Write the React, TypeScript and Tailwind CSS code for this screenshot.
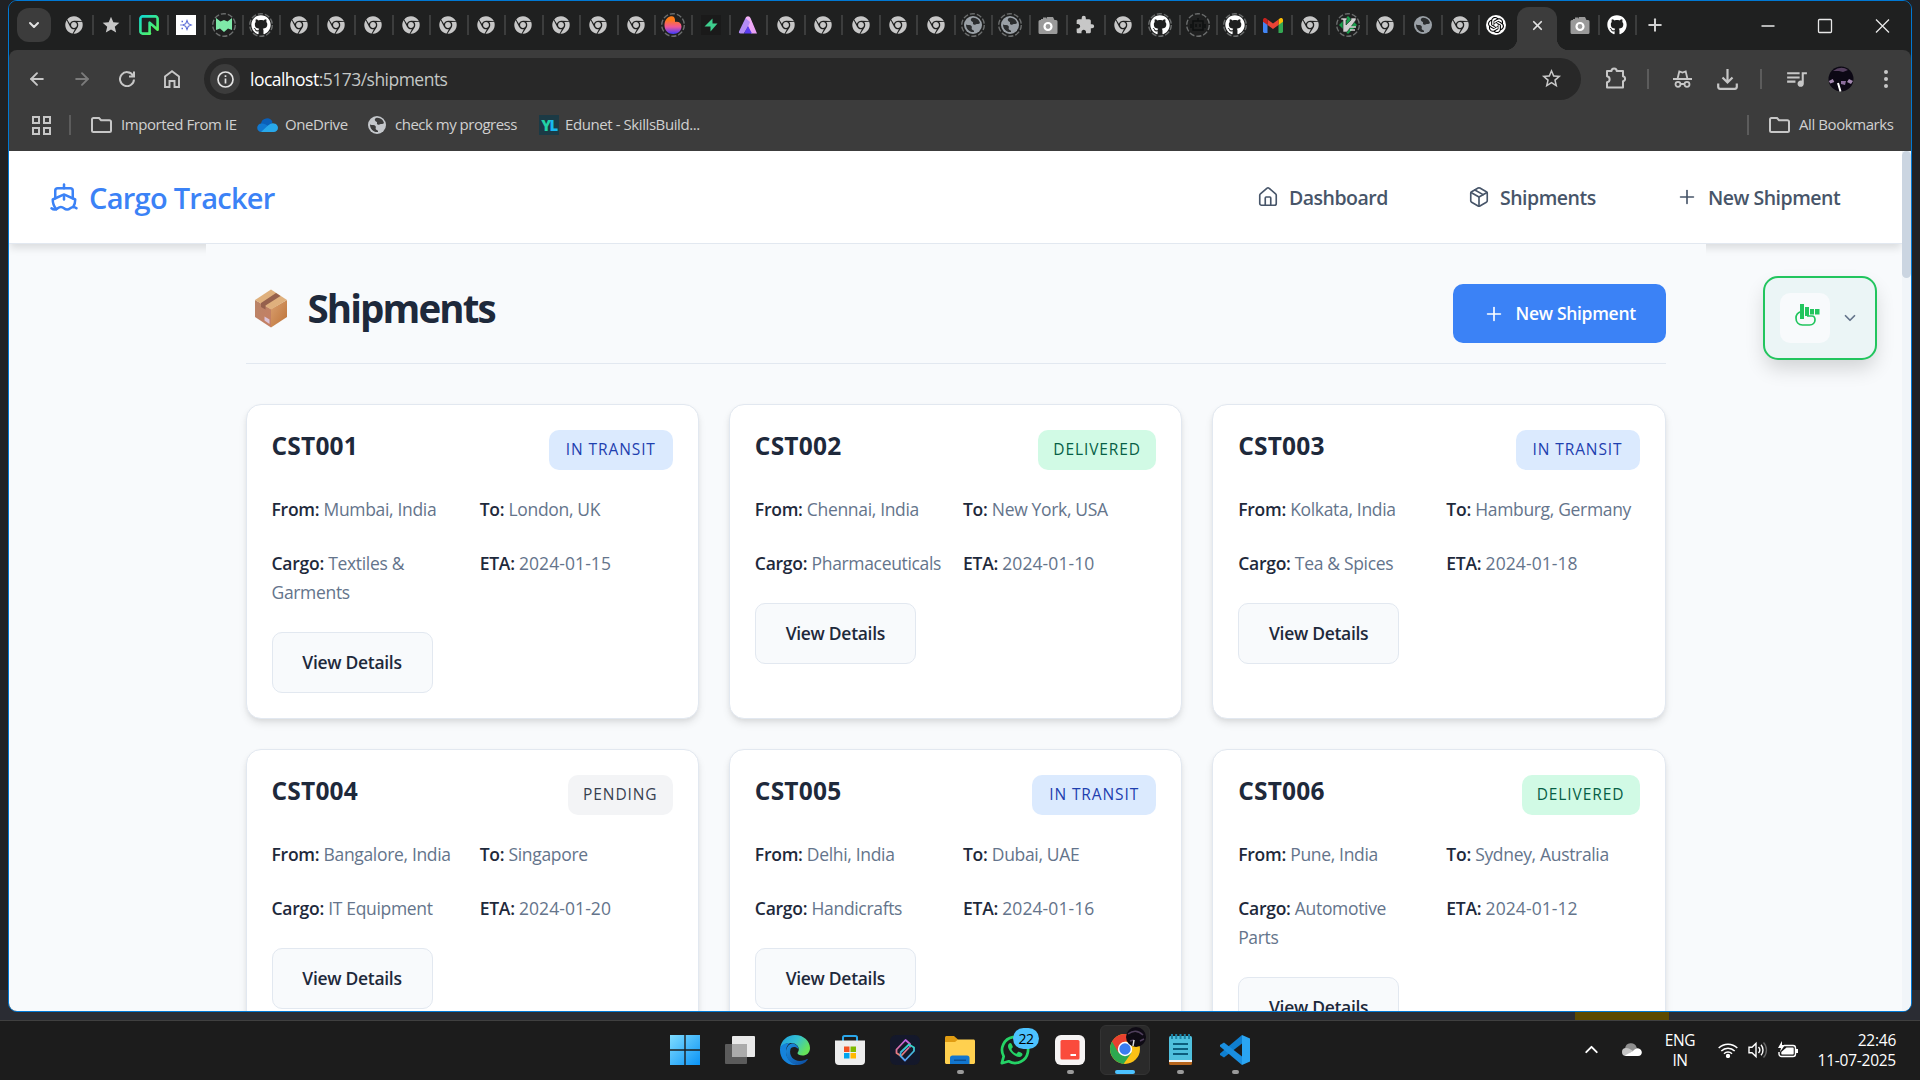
import React from "react";
import { FaChrome, FaGithub } from "react-icons/fa";
import { MdExtension, MdPublic, MdStar, MdStarBorder, MdQueueMusic } from "react-icons/md";
import { SiOpenai } from "react-icons/si";
import { ArrowLeft, ArrowRight, ChevronDown, ChevronUp, House, Package, Plus, Ship, X } from "lucide-react";

/* ---------- browser tab icons ---------- */

function Dashed({ children }: { children: React.ReactNode }) {
  return (
    <span className="relative flex size-6 items-center justify-center">
      <svg className="absolute inset-0 size-6" viewBox="0 0 24 24" fill="none">
        <circle cx="12" cy="12" r="11.3" stroke="#6b6d6d" strokeWidth="1.4" strokeDasharray="5.2 1.9" />
      </svg>
      {children}
    </span>
  );
}

const ChromeTab = () => <FaChrome className="size-[18px] text-[#c7c7c7]" />;
const GithubTab = () => <FaGithub className="size-5 text-white" />;
const GlobeTab = () => (
  <svg className="size-[18px]" viewBox="0 0 18 18">
    <circle cx="9" cy="9" r="9" fill="#9aa0a6" />
    <path d="M2 8.500c2 .8 4.500.2 5.500 1.500s-.5 2.500.5 3.500 2.500.5 2 2.500C5.500 16.500 2 13 2 8.500zM8 2c4-.8 7 1.500 8 5-1 1.500-3 .5-4.500 1.500-1.500.8-3-.3-2.500-1.500S7.500 5.500 7 4.500 7 2.500 8 2z" fill="#2b2d2e" />
  </svg>
);

const NeonTab = () => (
  <svg className="size-5" viewBox="0 0 20 20" fill="none">
    <defs>
      <linearGradient id="neon" x1="0" y1="0" x2="1" y2="1">
        <stop stopColor="#12d8d0" />
        <stop offset="1" stopColor="#5ff74e" />
      </linearGradient>
    </defs>
    <path d="M11 18.6H3.6a2.2 2.2 0 0 1-2.2-2.2V3.6a2.2 2.2 0 0 1 2.2-2.2h12.8a2.2 2.2 0 0 1 2.2 2.2v11.2l-8-7.2v11z" stroke="url(#neon)" strokeWidth="2.6" strokeLinejoin="round" />
  </svg>
);

const SparkleTab = () => (
  <svg className="size-5" viewBox="0 0 20 20" fill="none">
    <rect width="20" height="20" fill="#fff" />
    <path d="M11 5.500l1.300 3.200 3 1.300-3 1.300L11 14.500l-1.300-3.200-3-1.300 3-1.300z" stroke="#5b6bd6" strokeWidth="1.100" />
    <path d="M5.500 6.500h1.500M5.500 13.500h1.500M4.500 10h1" stroke="#5b6bd6" strokeWidth="1.300" />
  </svg>
);

const BatTab = () => (
  <svg className="size-4" viewBox="0 0 16 16">
    <path d="M0 1l4.500 3.500L8 3l3.500 1.500L16 1v12l-4-1.500L8 15l-4-3.500L0 13z" fill="#7fe8a8" />
  </svg>
);

const FlameTab = () => (
  <svg className="size-[18px]" viewBox="0 0 18 18">
    <defs>
      <linearGradient id="flame" x1="0" y1="0" x2="0" y2="1">
        <stop offset="0.2" stopColor="#ff7a18" />
        <stop offset="0.6" stopColor="#f0569a" />
        <stop offset="1" stopColor="#3b3bff" />
      </linearGradient>
    </defs>
    <path d="M6 .6c4-1.500 5.500 2 5 5.400 3.500-.8 6.500 1 6.500 4.500 0 4.500-3.700 7.500-8.300 7.500S.5 14.500.5 9.500C.5 5 2.500 1.800 6 .6z" fill="url(#flame)" />
  </svg>
);

const BoltTab = () => (
  <svg className="size-5" viewBox="0 0 20 20">
    <rect width="20" height="20" fill="#1a1a1a" />
    <path d="M11.500 3.500L3.500 11.500h6V16.500L16.500 8.500h-5z" fill="#3ecf8e" />
  </svg>
);

const LetterTab = () => (
  <svg className="size-5" viewBox="0 0 20 20">
    <defs>
      <linearGradient id="peak" x1="0" y1="0" x2="1" y2="1">
        <stop stopColor="#f7b7f7" />
        <stop offset="1" stopColor="#e79cf5" />
      </linearGradient>
    </defs>
    <path d="M7.500 3a2.700 2.700 0 0 1 5 0L19 18.500h-6L10 12z" fill="url(#peak)" />
    <path d="M7.500 3L1 16.500c-.4 1.300.2 2 1.400 2h3.400L10 12l2-5z" fill="#b48cf6" />
    <path d="M10 11l4 7.500H6z" fill="#5a3cf0" />
  </svg>
);

const CameraTab = () => (
  <svg className="size-5" viewBox="0 0 20 20">
    <path d="M3 4h2V2.500h3V4l1-2h6l1.500 3H18a1.500 1.500 0 0 1 1.500 1.500v11A1.500 1.500 0 0 1 18 19H2a1.500 1.500 0 0 1-1.500-1.500v-11A1.500 1.500 0 0 1 2 5h1z" fill="#9a9a9a" />
    <circle cx="10" cy="11.500" r="3.500" fill="none" stroke="#fff" strokeWidth="2.200" />
  </svg>
);

const RobotTab = () => (
  <svg className="size-4" viewBox="0 0 16 16" fill="none" stroke="#0e0f0f" strokeWidth="1.500">
    <path d="M8 1v3M3 4h10v9H3zM1 7v4M15 7v4M6 7v3M10 7v3" />
  </svg>
);

const GmailTab = () => (
  <svg className="h-[15px] w-5" viewBox="0 0 20 15">
    <path d="M0 3v10.600C0 14.400.6 15 1.400 15H4.500V6z" fill="#4285f4" />
    <path d="M15.500 6v9h3.100c.8 0 1.400-.6 1.400-1.400V3z" fill="#34a853" />
    <path d="M15.500 1.500V7L20 3.700V2c0-2-2-2.600-3.300-1.500z" fill="#fbbc04" />
    <path d="M4.500 7V1.500L10 5.600l5.500-4.100V7L10 11z" fill="#ea4335" />
    <path d="M0 2v1.700L4.500 7V1.500L3.300.5C2-.6 0 0 0 2z" fill="#c5221f" />
  </svg>
);

const VimTab = () => (
  <svg className="size-[18px]" viewBox="0 0 18 18">
    <path d="M9 0l9 9-9 9-9-9z" fill="#199f4b" />
    <path d="M2 2h6v2H7v5l5-5V2h5v2L8 16H4V4H2z" fill="#d0d0d0" stroke="#222" strokeWidth=".6" />
    <path d="M11 11h6M11 14h5" stroke="#d0d0d0" strokeWidth="1.300" />
  </svg>
);

const GptTab = () => (
  <span className="flex size-5 items-center justify-center rounded-full bg-white">
    <SiOpenai className="size-4 text-black" />
  </span>
);

const tabs: React.ReactNode[] = [
  <ChromeTab />,
  <MdStar className="size-5 text-[#c7c7c7]" />,
  <NeonTab />,
  <SparkleTab />,
  <Dashed><BatTab /></Dashed>,
  <Dashed><GithubTab /></Dashed>,
  ...Array.from({ length: 10 }, () => <ChromeTab />),
  <Dashed><FlameTab /></Dashed>,
  <BoltTab />,
  <LetterTab />,
  ...Array.from({ length: 5 }, () => <ChromeTab />),
  <Dashed><GlobeTab /></Dashed>,
  <Dashed><GlobeTab /></Dashed>,
  <CameraTab />,
  <MdExtension className="size-5 text-[#c7c7c7]" />,
  <ChromeTab />,
  <Dashed><GithubTab /></Dashed>,
  <Dashed><RobotTab /></Dashed>,
  <Dashed><GithubTab /></Dashed>,
  <GmailTab />,
  <ChromeTab />,
  <Dashed><VimTab /></Dashed>,
  <ChromeTab />,
  <GlobeTab />,
  <ChromeTab />,
  <GptTab />,
];

function Tab({ children, last = false }: { children: React.ReactNode; last?: boolean }) {
  return (
    <div className={last ? "flex h-full w-[34px] shrink-0 items-center" : "flex h-full w-[37.48px] shrink-0 items-center"}>
      <div className="flex flex-1 items-center justify-center">{children}</div>
      {!last && <div className="-mr-px h-5 w-0.5 shrink-0 bg-[#3c3d3d]" />}
    </div>
  );
}

function TabStrip() {
  return (
    <div className="flex h-[49px] shrink-0 items-center bg-[#1f2020] pl-2">
      <div className="mb-px flex h-[34px] w-[34px] shrink-0 items-center justify-center rounded-xl bg-[#3c3c3c]">
        <ChevronDown className="size-4 text-[#e3e3e3]" strokeWidth={3} />
      </div>
      <div className="ml-[4.5px] flex h-full pb-px">
        {tabs.map((icon, i) => (
          <Tab key={i} last={i === tabs.length - 1}>{icon}</Tab>
        ))}
      </div>
      <div className="relative ml-[4px] mt-[6px] flex h-[43px] w-[40px] shrink-0 items-center justify-center rounded-t-xl bg-[#3c3c3c] pb-[7px]">
        <span className="absolute bottom-0 right-full size-3 bg-[radial-gradient(circle_at_0_0,#1f2020_12px,#3c3c3c_12.5px)]" />
        <span className="absolute bottom-0 left-full size-3 bg-[radial-gradient(circle_at_100%_0,#1f2020_12px,#3c3c3c_12.5px)]" />
        <X className="size-[15px] text-[#e3e3e3]" strokeWidth={2.8} />
      </div>
      <div className="ml-[4px] flex h-full pb-px">
        <Tab><CameraTab /></Tab>
        <Tab><GithubTab /></Tab>
      </div>
      <Plus className="mb-px ml-[9px] size-[20px] shrink-0 text-[#d0d0d0]" strokeWidth={2.4} />
      <svg className="ml-auto mr-[21px] h-4 w-[130px] shrink-0" viewBox="0 0 130 16" fill="none" stroke="#e8e8e8" strokeWidth="1.300">
        <path d="M1.500 8h13M116 1.500l13 13M129 1.500l-13 13" />
        <rect x="58.500" y="1.500" width="13" height="13" rx="1" />
      </svg>
    </div>
  );
}

function FolderIcon() {
  return (
    <svg className="h-4 w-[21px] shrink-0" viewBox="0 0 21 16" fill="none">
      <path d="M1 13.500v-11A1.500 1.500 0 0 1 2.500 1H8l2 2.200h8.500A1.500 1.500 0 0 1 20 4.700v8.800a1.500 1.500 0 0 1-1.500 1.500h-16A1.500 1.500 0 0 1 1 13.500z" stroke="#c7c7c7" strokeWidth="2" />
    </svg>
  );
}

function Toolbar() {
  return (
    <div className="flex h-[58px] shrink-0 items-center rounded-t-lg bg-[#3c3c3c] text-[#c7c7c7]">
      <div className="flex w-[195px] items-center pb-px pl-[18px]">
        <ArrowLeft className="size-[20px]" strokeWidth={2.3} />
        <ArrowRight className="ml-[25px] size-[20px] text-[#7b7b7b]" strokeWidth={2.3} />
        <svg className="ml-[27px] size-4" viewBox="0 0 16 16" fill="none" stroke="#c7c7c7" strokeWidth="2">
          <path d="M14 4.500A7 7 0 1 0 15 8.500M15 .5v5h-5" />
        </svg>
        <svg className="ml-[29px] h-[18px] w-4" viewBox="0 0 16 18" fill="none" stroke="#c7c7c7" strokeWidth="1.900">
          <path d="M1 17V6.500L8 1.200l7 5.300V17h-4.500v-6h-5v6z" />
        </svg>
      </div>
      <div className="flex h-[42px] w-[1377px] shrink-0 items-center rounded-full bg-[#282828] pl-[6px] pr-[18px]">
        <span className="flex size-[30px] items-center justify-center rounded-full bg-[#3c3c3c]">
          <svg className="size-[17px]" viewBox="0 0 17 17" fill="none" stroke="#e3e3e3" strokeWidth="1.700">
            <circle cx="8.500" cy="8.500" r="7.500" />
            <path d="M8.500 7.500v5M8.500 4.300v1.700" />
          </svg>
        </span>
        <span className="ml-[10px] text-[17.5px] tracking-[-0.52px] text-[#c4c7c5]">
          <span className="text-white">localhost</span>:5173/shipments
        </span>
        <MdStarBorder className="mb-px ml-auto size-[23px]" />
      </div>
      <svg className="ml-[24px] mb-[2px] size-[22px]" viewBox="0 0 22 22" fill="none" stroke="#c7c7c7" strokeWidth="2">
        <path d="M2 4h4.500a2.600 2.600 0 0 1 5.200 0H18v5.200a2.600 2.600 0 0 1 0 5.100V20.500H2v-5.200c3.500-.5 3.500-5.500 0-6z" strokeLinejoin="round" />
      </svg>
      <div className="ml-[20px] h-5 w-0.5 bg-[#5c5c5c]" />
      <svg className="mb-px ml-[24px] h-[18px] w-[19px]" viewBox="0 0 19 18" fill="none" stroke="#c7c7c7" strokeWidth="1.800">
        <path d="M0 9h19M4.500 9L6.300 1.500l3.200 1 3.200-1L14.500 9M8 14h3" />
        <circle cx="5" cy="14.300" r="2.500" />
        <circle cx="14" cy="14.300" r="2.500" />
      </svg>
      <svg className="ml-[25px] size-[21px]" viewBox="0 0 21 21" fill="none" stroke="#c7c7c7" strokeWidth="2.200">
        <path d="M10.500 0v13M5.500 8.500l5 5 5-5M1.200 14.500v3.300c0 1.200.8 2 2 2h14.600c1.200 0 2-.8 2-2v-3.300" />
      </svg>
      <div className="ml-[22px] h-5 w-0.5 bg-[#5c5c5c]" />
      <MdQueueMusic className="mb-[2px] ml-[22px] size-[25px]" />
      <svg className="mb-px ml-[19px] size-[26px]" viewBox="0 0 26 26">
        <circle cx="13" cy="13" r="12.500" fill="#0c0814" />
        <path d="M5 5q8-6 15-1l-5 2-4-1z" fill="#55405f" />
        <path d="M.8 15l4-2 1.500 3-4 1.500zM25 15l-4-2-2 3 4 2z" fill="#a388b0" />
        <path d="M13 15l5 0-1 4-4-1z" fill="#8b6d9c" />
        <path d="M10 17l2.500 8.500" stroke="#fff" strokeWidth="2" />
      </svg>
      <svg className="ml-[30px] mb-px h-[18px] w-1" viewBox="0 0 4 18" fill="#c7c7c7">
        <circle cx="2" cy="2" r="2" />
        <circle cx="2" cy="9" r="2" />
        <circle cx="2" cy="16" r="2" />
      </svg>
    </div>
  );
}

function BookmarksBar() {
  return (
    <div className="flex h-[43px] shrink-0 items-center bg-[#3c3c3c] pl-[23px] pr-[17px] pb-[9px] text-[15px] tracking-[-0.42px] text-[#d0d0d0]">
      <svg className="size-[19px]" viewBox="0 0 19 19" fill="none" stroke="#c7c7c7" strokeWidth="2">
        <path d="M1 1h6v6H1zM12 1h6v6h-6zM1 12h6v6H1zM12 12h6v6h-6z" />
      </svg>
      <div className="ml-[18px] mr-5 h-5 w-0.5 bg-[#5c5c5c]" />
      <FolderIcon />
      <span className="mb-[2px] ml-[9px] w-[136px] whitespace-nowrap">Imported From IE</span>
      <svg className="h-[14px] w-[21px]" viewBox="0 0 21 14">
        <path d="M4 6a6 6 0 0 1 11.500-2l-3 5L3 12z" fill="#0a5fb8" />
        <path d="M4.500 14a4.300 4.300 0 0 1 0-8.600c2-.2 5 1 7 3z" fill="#1078d0" />
        <path d="M4 14h12.700a4.300 4.300 0 0 0 0-8.600c-2.700-.3-4 1-5.700 2.100z" fill="#28a8ea" />
      </svg>
      <span className="mb-[2px] ml-[7px] w-[83px] whitespace-nowrap">OneDrive</span>
      <svg className="size-[18px]" viewBox="0 0 18 18">
        <circle cx="9" cy="9" r="9" fill="#c4c7cb" />
        <path d="M2 8.500c2 .8 4.500.2 5.500 1.500s-.5 2.500.5 3.500 2.500.5 2 2.500C5.500 16.500 2 13 2 8.500zM8 2c4-.8 7 1.500 8 5-1 1.500-3 .5-4.500 1.500-1.500.8-3-.3-2.500-1.500S7.500 5.500 7 4.500 7 2.500 8 2z" fill="#3c3c3c" />
      </svg>
      <span className="mb-[2px] ml-[9px] w-[144px] whitespace-nowrap tracking-[-0.5px]">check my progress</span>
      <span className="flex size-5 items-center justify-center bg-[#1b3a45] text-[15px] font-extrabold tracking-[-1.5px]">
        <span className="text-[#22d3a5]">Y</span>
        <span className="text-[#18b8f0]">L</span>
      </span>
      <span className="mb-[2px] ml-[6px] whitespace-nowrap">Edunet - SkillsBuild...</span>
      <div className="ml-auto mr-[20px] h-5 w-0.5 bg-[#5c5c5c]" />
      <FolderIcon />
      <span className="mb-[2px] ml-[9px] w-[95px] whitespace-nowrap">All Bookmarks</span>
    </div>
  );
}

/* ---------- web page ---------- */

type Status = "IN TRANSIT" | "DELIVERED" | "PENDING";
type Shipment = { id: string; status: Status; from: string; to: string; cargo: string[]; eta: string };

const shipments: Shipment[] = [
  { id: "CST001", status: "IN TRANSIT", from: "Mumbai, India", to: "London, UK", cargo: ["Textiles &", "Garments"], eta: "2024-01-15" },
  { id: "CST002", status: "DELIVERED", from: "Chennai, India", to: "New York, USA", cargo: ["Pharmaceuticals"], eta: "2024-01-10" },
  { id: "CST003", status: "IN TRANSIT", from: "Kolkata, India", to: "Hamburg, Germany", cargo: ["Tea & Spices"], eta: "2024-01-18" },
  { id: "CST004", status: "PENDING", from: "Bangalore, India", to: "Singapore", cargo: ["IT Equipment"], eta: "2024-01-20" },
  { id: "CST005", status: "IN TRANSIT", from: "Delhi, India", to: "Dubai, UAE", cargo: ["Handicrafts"], eta: "2024-01-16" },
  { id: "CST006", status: "DELIVERED", from: "Pune, India", to: "Sydney, Australia", cargo: ["Automotive", "Parts"], eta: "2024-01-12" },
];

const badgeStyle: Record<Status, string> = {
  "IN TRANSIT": "w-[124px] bg-[#dbeafe] text-[#1e40af]",
  DELIVERED: "w-[118px] bg-[#d1fae5] text-[#065f46]",
  PENDING: "w-[105px] bg-[#f3f4f6] text-[#374151]",
};

function Field({ label, lines, numeric = false }: { label: string; lines: string[]; numeric?: boolean }) {
  return (
    <p className="whitespace-nowrap text-[17.5px] leading-[29px] tracking-[-0.33px] text-[#64748b]">
      <span className="font-semibold tracking-[-0.25px] text-[#1e293b]">{label}:</span>{" "}
      <span className={numeric ? "tracking-[0.08px]" : undefined}>
        {lines.map((line, i) => (
          <React.Fragment key={line}>
            {i > 0 && <br />}
            {line}
          </React.Fragment>
        ))}
      </span>
    </p>
  );
}

function ShipmentCard({ s }: { s: Shipment }) {
  return (
    <div className="rounded-[15px] border border-[#e2e8f0] bg-white p-[25px] shadow-[0_5px_8px_-1px_rgba(0,0,0,0.1),0_2px_5px_-1px_rgba(0,0,0,0.06)]">
      <div className="mb-[25px] flex h-10 items-start justify-between">
        <h3 className="text-[24.5px] font-bold leading-[31px] tracking-[0.2px] text-[#1e293b]">{s.id}</h3>
        <span className={`flex h-10 items-center justify-center whitespace-nowrap rounded-[10px] text-[15.5px] font-medium tracking-[0.9px] ${badgeStyle[s.status]}`}>
          {s.status}
        </span>
      </div>
      <div className="mb-[25px] grid grid-cols-2 gap-x-[15px] gap-y-[25px]">
        <Field label="From" lines={[s.from]} />
        <Field label="To" lines={[s.to]} />
        <Field label="Cargo" lines={s.cargo} />
        <Field label="ETA" lines={[s.eta]} numeric />
      </div>
      <button className="h-[61px] w-[161px] rounded-[10px] border border-[#e2e8f0] bg-[#f8fafc] text-[17.5px] font-semibold tracking-[-0.3px] text-[#1e293b]">
        View Details
      </button>
    </div>
  );
}

function ParcelIcon() {
  return (
    <svg className="h-[39px] w-8" viewBox="0 0 32 39">
      <defs>
        <linearGradient id="parcelL" x1="0" y1="0" x2="1" y2="1">
          <stop stopColor="#b98468" />
          <stop offset="1" stopColor="#c67f63" />
        </linearGradient>
        <linearGradient id="parcelR" x1="0" y1="0" x2="1" y2="1">
          <stop stopColor="#d9a070" />
          <stop offset="1" stopColor="#bd7237" />
        </linearGradient>
      </defs>
      <path d="M0 11l16 9v18.500L0 28z" fill="url(#parcelL)" />
      <path d="M32 11l-16 9v18.500L32 28z" fill="url(#parcelR)" />
      <path d="M16 .5L32 11l-16 9.500L0 11z" fill="#dfb07d" />
      <path d="M21 4l4.500 3L10.500 16.500v4L6 18v-4z" fill="#96614d" />
      <path d="M9.500 27.500l5 3V35l-5-3.500z" fill="#dcc3d6" />
    </svg>
  );
}

function NavLink({ icon, children, className }: { icon: React.ReactNode; children: React.ReactNode; className: string }) {
  return (
    <a className={`flex items-center whitespace-nowrap text-[19.5px] font-semibold tracking-[-0.5px] text-[#475569] ${className}`}>
      {icon}
      <span className="mt-[2px]">{children}</span>
    </a>
  );
}

function PointerWidget() {
  return (
    <div className="absolute right-[34px] top-[125px] flex h-[84px] w-[114px] items-center rounded-[15px] border-2 border-[#22c55e] bg-[#ebf5f6] pl-[15px] shadow-[0_10px_20px_-2px_rgba(0,0,0,0.16)]">
      <div className="flex size-[50px] items-center justify-center rounded-[10px] bg-[#f8fafc]">
        <svg className="mb-[6px] ml-[4px] h-[22px] w-[25px]" viewBox="0 0 25 22">
          <path d="M6 7.500C3 8.500 1 10.500 1 14c0 4 2.500 7 6.500 7h7c3.500 0 5.500-2.500 5.500-5s-1-4-3-4h-5" fill="none" stroke="#22c55e" strokeWidth="1.700" />
          <path d="M5 0h4v15H5zM10 3h4v9h-4zM15 5h4v5.500h-4zM20 5h4.500v5.500H20z" fill="#22c55e" />
        </svg>
      </div>
      <ChevronDown className="ml-[11px] size-[18px] text-[#64748b]" strokeWidth={2.3} />
    </div>
  );
}

function Page() {
  return (
    <div className="relative flex min-h-0 flex-1 overflow-hidden bg-[#f8fafc]">
      <div className="flex min-w-0 flex-1 flex-col">
        <nav className="flex h-[93px] shrink-0 items-center border-b border-[#e2e8f0] bg-white pl-[40px] pr-[59px] shadow-[0_5px_8px_-1px_rgba(0,0,0,0.12)]">
          <div className="flex items-center text-[29px] font-semibold tracking-[-0.72px] text-[#3b82f6]">
            <Ship className="mr-[10px] size-[30px]" strokeWidth={2} />
            <span className="mt-[2px]">Cargo Tracker</span>
          </div>
          <NavLink className="ml-auto w-[211px]" icon={<House className="mr-[10px] size-[22px]" strokeWidth={1.8} />}>Dashboard</NavLink>
          <NavLink className="w-[208px]" icon={<Package className="mr-[10px] size-[22px]" strokeWidth={1.8} />}>Shipments</NavLink>
          <NavLink className="w-[167px]" icon={<Plus className="mr-[10px] size-[22px]" strokeWidth={1.8} />}>New Shipment</NavLink>
        </nav>
        <main className="z-10 mx-auto flex w-[1500px] flex-col bg-[#f8fafc] px-[40px] pt-10">
          <div className="mb-10 flex h-20 items-start justify-between border-b border-[#e2e8f0]">
            <h1 className="ml-[9px] mt-[-6px] flex items-center text-[38.5px] font-bold leading-[60px] tracking-[-1.9px] text-[#1e293b]">
              <ParcelIcon />
              <span className="ml-[21px]">Shipments</span>
            </h1>
            <button className="flex h-[59px] w-[213px] items-center rounded-[10px] bg-[#3b82f6] pl-[30px] text-[17.5px] font-semibold tracking-[-0.3px] text-white">
              <Plus className="mr-[11px] size-[22px]" strokeWidth={1.8} />
              New Shipment
            </button>
          </div>
          <div className="grid grid-cols-3 gap-x-[30px] gap-y-[30px]">
            {shipments.map((s) => (
              <ShipmentCard key={s.id} s={s} />
            ))}
          </div>
        </main>
      </div>
      <div className="w-[9px] shrink-0 bg-[#f1f5f9]">
        <div className="h-[127px] rounded-[5px] bg-[#cbd5e1]" />
      </div>
      <PointerWidget />
    </div>
  );
}

/* ---------- Windows taskbar ---------- */

function WindowsIcon() {
  return (
    <svg className="size-[30px]" viewBox="0 0 30 30">
      <defs>
        <linearGradient id="win" x1="0" y1="0" x2="1" y2="1">
          <stop stopColor="#7fdcff" />
          <stop offset="1" stopColor="#0a93f5" />
        </linearGradient>
      </defs>
      <path d="M0 0h14.300v14.300H0zM15.700 0H30v14.300H15.700zM0 15.700h14.300V30H0zM15.700 15.700H30V30H15.700z" fill="url(#win)" />
    </svg>
  );
}

const TaskViewIcon = () => (
  <svg className="h-[28px] w-[30px]" viewBox="0 0 30 28">
    <rect y="8" width="22" height="20" rx="1" fill="#5b5b5b" />
    <rect x="7" width="23" height="21" rx="1" fill="#e9e9e9" />
    <rect x="7" y="8" width="15" height="13" fill="#ababab" />
  </svg>
);

function EdgeIcon() {
  return (
    <svg className="size-[30px]" viewBox="0 0 30 30">
      <defs>
        <linearGradient id="edgeTop" x1="0" y1="0" x2="1" y2="0.5">
          <stop stopColor="#1b9de2" />
          <stop offset="0.55" stopColor="#35c1d0" />
          <stop offset="1" stopColor="#66e35a" />
        </linearGradient>
        <linearGradient id="edgeLow" x1="0" y1="0" x2="1" y2="1">
          <stop stopColor="#1b8fe0" />
          <stop offset="1" stopColor="#0c4a9e" />
        </linearGradient>
      </defs>
      <path d="M0 14C1 5 7.500 0 15 0c9 0 15 6.500 15 13 0 5-3.500 7.500-7.500 7.500-3 0-5-1-5-2.200 0-1 1.300-1.500 1.300-4C18.800 11 15.500 8 11 8 5 8 1 11 0 14z" fill="url(#edgeTop)" />
      <path d="M0 14c.5-4 5-6 10-6-3 2-4 5-4 8.500C6 23 11 29 18 29.700 8 31.500 0 25 0 15z" fill="#1583dc" />
      <path d="M10.500 14c-2 7 3.500 12 9 12 3.500 0 6-1.200 7.500-2 .6-.3 1 .2.6.8C25 28.500 21 30 17 30 10 29 6 23 6 17c0-4 2.500-8 6-8.500 3.500 0 6.500 2.500 6.500 5.500-3-3-7-2.500-8 0z" fill="url(#edgeLow)" />
    </svg>
  );
}

const StoreIcon = () => (
  <svg className="size-[30px]" viewBox="0 0 30 30">
    <path d="M8 7V2.500A1.500 1.500 0 0 1 9.500 1h11A1.500 1.500 0 0 1 22 2.500V7" fill="none" stroke="#2ba7ea" strokeWidth="2" />
    <path d="M0 5.500h30V26a4 4 0 0 1-4 4H4a4 4 0 0 1-4-4z" fill="#ededed" />
    <path d="M9 11.500h5.500V17H9z" fill="#f25022" />
    <path d="M15.500 11.500H21V17h-5.500z" fill="#7fba00" />
    <path d="M9 18h5.500v5.500H9z" fill="#00a4ef" />
    <path d="M15.500 18H21v5.500h-5.500z" fill="#ffb900" />
  </svg>
);

const KnotIcon = () => (
  <svg className="size-[30px]" viewBox="0 0 30 30" fill="none">
    <defs>
      <linearGradient id="knotA" x1="0" y1="0" x2="0" y2="1">
        <stop stopColor="#c061e8" />
        <stop offset="1" stopColor="#f08068" />
      </linearGradient>
      <linearGradient id="knotB" x1="0" y1="0" x2="0" y2="1">
        <stop stopColor="#2fd9c8" />
        <stop offset="1" stopColor="#5b9cf5" />
      </linearGradient>
    </defs>
    <rect width="30" height="30" rx="6" fill="#14182b" />
    <path d="M20 12.500V9l-4.500-4-9 9.500v3.500l4.500 3 8-8.500" stroke="url(#knotA)" strokeWidth="1.800" strokeLinejoin="round" />
    <path d="M10.500 17.500V21l4.500 4.500 9-9.500v-3.500L19 9.500l-8.500 8" stroke="url(#knotB)" strokeWidth="1.800" strokeLinejoin="round" />
  </svg>
);

const ExplorerIcon = () => (
  <svg className="h-[28px] w-[30px]" viewBox="0 0 30 28">
    <path d="M0 8V1.500C0 .7.700 0 1.500 0H9l4 3.500V8z" fill="#e09c12" />
    <path d="M0 6h10l3-2.500h15.500c.8 0 1.500.7 1.500 1.500v21.500c0 .8-.7 1.500-1.500 1.500h-27C.7 28 0 27.300 0 26.500z" fill="#ffd04f" />
    <path d="M5 28v-6a2.500 2.500 0 0 1 2.500-2.500h14.500a2.500 2.500 0 0 1 2.500 2.500v6z" fill="#1276cf" />
    <path d="M9 23.500h12V25H9z" fill="#0b4f93" />
  </svg>
);

const WhatsAppIcon = () => (
  <span className="relative flex size-[30px]">
    <svg className="size-[30px]" viewBox="0 0 30 30">
      <path d="M1.800 28.200l1.900-6.900a13 13 0 1 1 5 5z" fill="#1c1c1c" stroke="#25d366" strokeWidth="2.700" strokeLinejoin="round" />
      <path d="M10.500 8c-1.500 0-2.500 1.500-2.500 3.300 0 4 6.500 11 11.500 10.700 1.800-.1 3-1.300 3-3 0-.8-3.500-2.500-4.200-2.200-.8.300-1.200 2-2 1.900-2-.5-4.300-3-4.800-4.500 0-.9 1.300-1.300 1.300-2.200 0-.8-1.300-4-2.300-4z" fill="#25d366" />
    </svg>
    <span className="absolute -right-[9px] -top-[7px] flex h-[21px] w-[26px] items-center justify-center rounded-full bg-[#4cc2ff] text-[14px] tracking-[-0.5px] text-black">22</span>
  </span>
);

const RedAppIcon = () => (
  <svg className="size-[30px]" viewBox="0 0 30 30">
    <rect width="30" height="30" rx="6" fill="#f6f4f4" />
    <rect x="5.500" y="5" width="19" height="19.500" rx="1.500" fill="#fa4b3c" />
    <path d="M15.500 19h5.500v2h-5.500z" fill="#fff" />
  </svg>
);

const ChromeColorIcon = () => (
  <svg className="-mt-[8px] ml-[7px] h-[38px] w-[38px]" viewBox="0 0 38 38">
    <g transform="translate(0 7)">
      <circle cx="15" cy="15" r="15" fill="#fbc116" />
      <path d="M15 15L2 7.500a15 15 0 0 0 11.500 22.400L21.500 18.700z" fill="#2da94f" />
      <path d="M2 7.500a15 15 0 0 1 26 0H15L8.500 18.700z" fill="#e8402f" />
      <circle cx="15" cy="15" r="7.200" fill="#fff" />
      <circle cx="15" cy="15" r="5.700" fill="#3a7cf0" />
    </g>
    <circle cx="26" cy="10" r="10" fill="#0e0a14" />
    <path d="M18 7q8-6 15 1M20 14l4-1M30 14l4-2" stroke="#4f3f5c" strokeWidth="1.500" fill="none" />
    <path d="M24 13l-1 6" stroke="#ddd" strokeWidth="1.500" />
  </svg>
);

const NotepadIcon = () => (
  <svg className="h-[31px] w-[23px]" viewBox="0 0 23 31">
    <rect y="2" width="23" height="27" rx="1.500" fill="#4fc0dd" />
    <path d="M0 26h23v2H0z" fill="#f4f4f4" />
    <path d="M0 28h23v1.500a1.500 1.500 0 0 1-1.500 1.500h-20A1.500 1.500 0 0 1 0 29.500z" fill="#b5651d" />
    <path d="M4 10h15M4 15h15M4 20h15" stroke="#0c5d7c" strokeWidth="2" />
    <path d="M3 0v5M7.200 0v5M11.500 0v5M15.800 0v5M20 0v5" stroke="#1c83a5" strokeWidth="2" />
  </svg>
);

const CodeIcon = () => (
  <svg className="size-[30px]" viewBox="0 0 30 30">
    <path d="M22 0l8 3.500v23L22 30z" fill="#2aa5f2" />
    <path d="M22 0v8.500L4 22.500 0 20v-1.500z" fill="#0f7fd0" />
    <path d="M22 30v-8.500L4 7.500 0 10v1.500z" fill="#1a8fe0" />
  </svg>
);

function TaskItem({ children, mark }: { children: React.ReactNode; mark?: "idle" | "active" }) {
  const active = mark === "active";
  return (
    <div className="flex w-[55.1px] justify-center">
      <div className={active ? "relative flex size-[50px] items-center justify-center rounded-md border border-[#333] bg-[#2a2a2a]" : "relative flex size-[50px] items-center justify-center"}>
        {children}
        {mark && (
          <span className={active ? "absolute bottom-0 h-1 w-5 rounded-full bg-[#4cc2ff]" : "absolute bottom-[1px] h-1 w-[7px] rounded-full bg-[#9a9a9a]"} />
        )}
      </div>
    </div>
  );
}

function Taskbar() {
  return (
    <div className="flex h-[60px] shrink-0 items-center border-t border-[#404040] bg-[#1c1c1c] pb-[2px] pl-[657px] pr-[24px] text-[15.5px] tracking-[-0.4px] text-white">
      <TaskItem><WindowsIcon /></TaskItem>
      <TaskItem><TaskViewIcon /></TaskItem>
      <TaskItem><EdgeIcon /></TaskItem>
      <TaskItem><StoreIcon /></TaskItem>
      <TaskItem><KnotIcon /></TaskItem>
      <TaskItem mark="idle"><ExplorerIcon /></TaskItem>
      <TaskItem><WhatsAppIcon /></TaskItem>
      <TaskItem mark="idle"><RedAppIcon /></TaskItem>
      <TaskItem mark="active"><ChromeColorIcon /></TaskItem>
      <TaskItem mark="idle"><NotepadIcon /></TaskItem>
      <TaskItem mark="idle"><CodeIcon /></TaskItem>
      <ChevronUp className="ml-auto size-[21px]" strokeWidth={2.2} />
      <svg className="ml-[20px] h-[13px] w-5" viewBox="0 0 20 13">
        <path d="M3 5.500A6 6 0 0 1 14.500 4l1 4-12 2z" fill="#8f8f8f" />
        <path d="M4 13a4 4 0 0 1 0-8c3 0 5 1.500 7 3z" fill="#c4c4c4" />
        <path d="M3 12.500L11 8c2-2 4-3 5.500-2.500C21 6.500 21 13 16 13H4z" fill="#fff" />
      </svg>
      <div className="ml-[20px] w-[36px] text-center leading-5">ENG<br />IN</div>
      <svg className="ml-[20px] h-4 w-5" viewBox="0 0 20 16" fill="none" stroke="#fff" strokeWidth="1.500">
        <path d="M.7 6a13.200 13.200 0 0 1 18.600 0M3.300 9a9.500 9.500 0 0 1 13.400 0M6 11.700a5.700 5.700 0 0 1 8 0" />
        <circle cx="10" cy="14" r="1.400" fill="#fff" />
      </svg>
      <svg className="ml-[10px] h-[18px] w-5" viewBox="0 0 20 18" fill="none" stroke="#fff" strokeWidth="1.400">
        <path d="M1 6.300h3L8 2.500v13l-4-3.800H1zM10.500 6a4.500 4.500 0 0 1 0 6M13 3.700a8 8 0 0 1 0 10.600" />
        <path d="M15.500 1.500a11 11 0 0 1 0 15" stroke="#666" />
      </svg>
      <svg className="ml-[10px] h-[17px] w-5" viewBox="0 0 20 17">
        <path d="M6 4.500h9a2.500 2.500 0 0 1 2.500 2.500v6a2.500 2.500 0 0 1-2.500 2.500H3.500A2.500 2.500 0 0 1 1 13v-2" fill="none" stroke="#fff" strokeWidth="1.400" />
        <path d="M8.500 6.500H15a.7.700 0 0 1 .7.700v5.600a.7.700 0 0 1-.7.700H4a.7.700 0 0 1-.7-.7V11zM18 8h2v4h-2zM4 0L0 7h3l-1 4 5-7H4z" fill="#fff" />
      </svg>
      <div className="ml-[16px] w-[82px] whitespace-nowrap text-right leading-5 tracking-[-0.25px]">22:46<br />11-07-2025</div>
    </div>
  );
}

export default function App() {
  return (
    <div className="flex h-[1080px] w-[1920px] flex-col overflow-hidden bg-[#202124] font-['Open_Sans',sans-serif]">
      <div className="flex h-[1020px] shrink-0 flex-col bg-[linear-gradient(#202124_0,#202124_990px,#2a2c33_990px)] px-2">
        <div className="flex h-[1012px] flex-col overflow-hidden rounded-[9px] border border-[#0078d4] bg-[#1f2020]">
          <TabStrip />
          <Toolbar />
          <BookmarksBar />
          <Page />
        </div>
        <div className="ml-[1567px] h-2 w-[94px] bg-[#5c4a00]" />
      </div>
      <Taskbar />
    </div>
  );
}
